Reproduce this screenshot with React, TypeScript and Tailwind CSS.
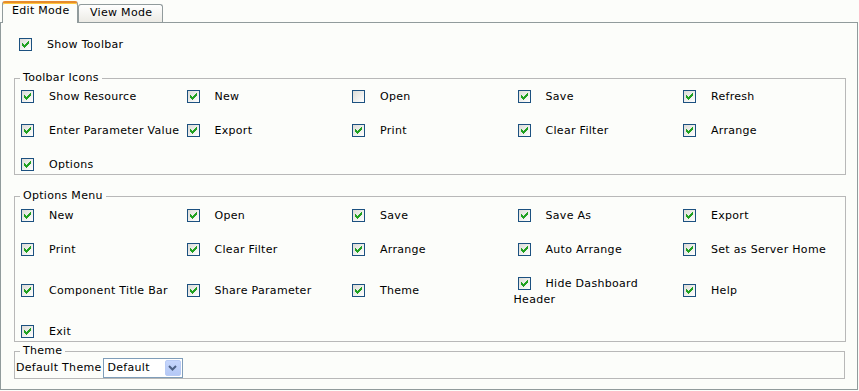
import React from 'react';

const font = "font-['Verdana','DejaVu_Sans',sans-serif]";

// XP-style green tick, pixel rows [x, y, w] inside the 11x11 box
const tick: [number, number, number][] = [
  [8, 2, 1],
  [7, 3, 2],
  [2, 4, 1],
  [6, 4, 3],
  [2, 5, 2],
  [5, 5, 3],
  [2, 6, 5],
  [3, 7, 3],
  [4, 8, 1],
];

function Check({ checked = true }: { checked?: boolean }) {
  return (
    <span className="inline-block align-middle w-[13px] h-[13px] ml-[4px] mr-[15px] my-[3px] border border-[#1c5180] bg-linear-to-br from-[#dcdcd7] to-white">
      {checked && (
        <svg width="11" height="11" viewBox="0 0 11 11" shapeRendering="crispEdges" className="block">
          {tick.map(([x, y, w], i) => (
            <rect key={i} x={x} y={y} width={w} height={1} fill="#21a121" />
          ))}
        </svg>
      )}
    </span>
  );
}

type Item = { label: string; checked?: boolean };

function Options({ items }: { items: Item[] }) {
  return (
    <div className="grid grid-cols-[repeat(5,165.5px)] gap-y-[15px] items-center pl-[2px]">
      {items.map((it) => (
        <div key={it.label} className="leading-[14px]">
          <Check checked={it.checked !== false} />
          {it.label}
        </div>
      ))}
    </div>
  );
}

function Group({ title, children, className = '' }: { title: string; children: React.ReactNode; className?: string }) {
  return (
    <fieldset className={`border border-[#b8b8b8] ${className}`}>
      <legend className="ml-[5px] px-[3px] leading-[14px]">{title}</legend>
      {children}
    </fieldset>
  );
}

const toolbarIcons: Item[] = [
  { label: 'Show Resource' },
  { label: 'New' },
  { label: 'Open', checked: false },
  { label: 'Save' },
  { label: 'Refresh' },
  { label: 'Enter Parameter Value' },
  { label: 'Export' },
  { label: 'Print' },
  { label: 'Clear Filter' },
  { label: 'Arrange' },
  { label: 'Options' },
];

const optionsMenu: Item[] = [
  { label: 'New' },
  { label: 'Open' },
  { label: 'Save' },
  { label: 'Save As' },
  { label: 'Export' },
  { label: 'Print' },
  { label: 'Clear Filter' },
  { label: 'Arrange' },
  { label: 'Auto Arrange' },
  { label: 'Set as Server Home' },
  { label: 'Component Title Bar' },
  { label: 'Share Parameter' },
  { label: 'Theme' },
  { label: 'Hide Dashboard Header' },
  { label: 'Help' },
  { label: 'Exit' },
];

export default function App() {
  return (
    <div className={`w-[859px] h-[391px] bg-[#fcfdfa] text-[11px] tracking-[0.3px] text-black ${font}`}>
      {/* TABS */}
      <div className="flex items-end h-[22px] pl-[2px]">
        <div className="relative z-10 -mb-px h-[22px] w-[76px] flex items-center pl-[9px] pb-[3px] border-x border-t-2 border-[#919b9c] border-t-[#e68b2c] rounded-t-[3px] bg-[#fcfdfa] shadow-[inset_0_1px_0_#ffc73c]">
          Edit Mode
        </div>
        <div className="h-[18px] w-[85px] flex items-center pl-[11px] border border-b-0 border-[#919b9c] rounded-t-[3px] bg-linear-to-b from-white to-[#ecebe5]">
          View Mode
        </div>
      </div>

      {/* PANEL */}
      <div className="w-[858px] h-[368px] border border-[#919b9c] pl-[13px] pr-[12px] pt-[12px]">
        <div className="pl-px leading-[14px]">
          <Check />
          Show Toolbar
        </div>

        <Group title="Toolbar Icons" className="mt-[17px] pt-[2px] -mb-px">
          <Options items={toolbarIcons} />
        </Group>

        <Group title="Options Menu" className="mt-[15px] pt-[3px]">
          <Options items={optionsMenu} />
        </Group>

        <Group title="Theme" className="mt-[2px]">
          <div className="flex items-center pl-px">
            <span className="mr-px">Default Theme</span>
            <div className="flex items-center w-[80px] h-[20px] border border-[#7f9db9] bg-white pl-[4px]">
              <span className="flex-1">Default</span>
              <span className="w-[16px] h-[16px] mr-px flex items-center justify-center rounded-[2px] bg-linear-to-b from-[#c6d6fc] to-[#b4c8f6] border border-[#b9cbf5]">
                <svg width="9" height="6" viewBox="0 0 9 6">
                  <path d="M1 1 L4.5 4.5 L8 1" fill="none" stroke="#4d6185" strokeWidth="2" />
                </svg>
              </span>
            </div>
          </div>
        </Group>
      </div>
    </div>
  );
}
